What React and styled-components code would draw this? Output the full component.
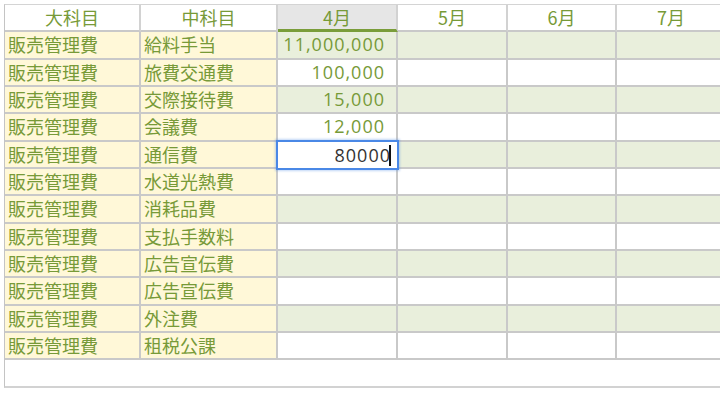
import styled, { createGlobalStyle, css } from "styled-components";

const GlobalStyle = createGlobalStyle`
  html, body {
    margin: 0;
    padding: 0;
    background: #fff;
    overflow: hidden;
  }
  body {
    font-family: "Noto Sans CJK JP", "Noto Sans", sans-serif;
  }
`;

const Page = styled.div`
  width: 720px;
  height: 406px;
  overflow: hidden;
  padding: 4px 0 0 4px;
  box-sizing: border-box;
`;

const Sheet = styled.div`
  display: grid;
  grid-template-columns: 136px 137px 120px 110px 109px 110px;
  grid-auto-rows: 27.33px;
  width: 722px;
  border-top: 1px solid #d4d4d4;
  border-left: 1px solid #c4c4c4;
`;

const numFont = css`
  font-family: "Open Sans", "Noto Sans", sans-serif;
  font-size: 18px;
  letter-spacing: 1px;
`;

const Cell = styled.div`
  box-sizing: border-box;
  border-right: 2px solid #c9c9c9;
  border-bottom: 2px solid #c9c9c9;
  color: #779a38;
  font-size: 18px;
  line-height: 25px;
  white-space: nowrap;
  overflow: hidden;
  position: relative;
  background: ${(p) => (p.$kind === "label" ? "#fff8d8" : p.$tint ? "#e9efdc" : "#fff")};
  padding: 0 3px;
  ${(p) =>
    p.$num &&
    css`
      ${numFont};
      text-align: right;
      padding-right: 11px;
    `}
`;

const HeadCell = styled.div`
  box-sizing: border-box;
  border-right: 2px solid #d2d2d2;
  border-bottom: ${(p) => (p.$active ? "3px solid #7a9d3a" : "2px solid #c9c9c9")};
  background: ${(p) => (p.$active ? "#e6e6e6" : "#fff")};
  color: #779a38;
  font-size: 18px;
  line-height: 25px;
  text-align: center;
  white-space: nowrap;
`;

const Editor = styled.div`
  position: absolute;
  left: -2px;
  top: -2px;
  right: -3px;
  bottom: -3px;
  border: 2px solid #4a88e6;
  box-shadow: 0 0 2px 1px rgba(74, 136, 230, 0.35);
  background: #fff;
  color: #333;
  ${numFont};
  line-height: 27px;
  text-align: right;
  padding-right: 6px;
  z-index: 2;
  &::after {
    content: "";
    display: inline-block;
    width: 2px;
    height: 21px;
    background: #111;
    vertical-align: -4px;
    margin-left: -2px;
  }
`;

const EditCell = styled(Cell)`
  overflow: visible;
  z-index: 2;
`;

const Footer = styled.div`
  width: 722px;
  height: 28px;
  box-sizing: border-box;
  border-left: 1px solid #c4c4c4;
  border-bottom: 2px solid #d2d2d2;
`;

const months = ["4月", "5月", "6月", "7月"];

const rows = [
  { sub: "給料手当", value: "11,000,000" },
  { sub: "旅費交通費", value: "100,000" },
  { sub: "交際接待費", value: "15,000" },
  { sub: "会議費", value: "12,000" },
  { sub: "通信費", edit: "80000" },
  { sub: "水道光熱費" },
  { sub: "消耗品費" },
  { sub: "支払手数料" },
  { sub: "広告宣伝費" },
  { sub: "広告宣伝費" },
  { sub: "外注費" },
  { sub: "租税公課" },
];

export default function App() {
  return (
    <Page>
      <GlobalStyle />
      <Sheet>
        <HeadCell>大科目</HeadCell>
        <HeadCell>中科目</HeadCell>
        {months.map((m, i) => (
          <HeadCell key={m} $active={i === 0}>
            {m}
          </HeadCell>
        ))}
        {rows.map((r, i) => {
          const tint = i % 2 === 0;
          return [
            <Cell key={`a${i}`} $kind="label">販売管理費</Cell>,
            <Cell key={`b${i}`} $kind="label">{r.sub}</Cell>,
            r.edit ? (
              <EditCell key={`c${i}`} $tint={tint} $num>
                <Editor>{r.edit}</Editor>
              </EditCell>
            ) : (
              <Cell key={`c${i}`} $tint={tint} $num>
                {r.value}
              </Cell>
            ),
            <Cell key={`d${i}`} $tint={tint} />,
            <Cell key={`e${i}`} $tint={tint} />,
            <Cell key={`f${i}`} $tint={tint} />,
          ];
        })}
      </Sheet>
      <Footer />
    </Page>
  );
}
